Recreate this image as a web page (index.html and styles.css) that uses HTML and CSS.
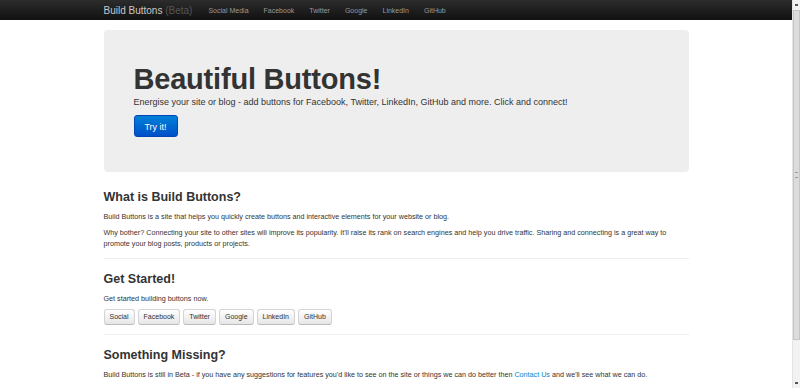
FILE: index.html
```html
<!DOCTYPE html>
<html lang="en">
<head>
    <meta charset="UTF-8">
    <title>Build Buttons</title>
    <link rel="stylesheet" href="styles.css">
</head>
<body>
    <div class="page">
        <div class="navbar">
            <div class="container nav-inner">
                <a class="brand" href="#">Build Buttons <span class="beta">(Beta)</span></a>
                <ul class="nav">
                    <li><a href="#">Social Media</a></li>
                    <li><a href="#">Facebook</a></li>
                    <li><a href="#">Twitter</a></li>
                    <li><a href="#">Google</a></li>
                    <li><a href="#">LinkedIn</a></li>
                    <li><a href="#">GitHub</a></li>
                </ul>
            </div>
        </div>

        <div class="container">
            <!-- Hero -->
            <div class="hero-unit">
                <h1>Beautiful Buttons!</h1>
                <p>Energise your site or blog - add buttons for Facebook, Twitter, LinkedIn, GitHub and more. Click and connect!</p>
                <a class="btn-primary" href="#">Try it!</a>
            </div>

            <div class="section">
                <h2>What is Build Buttons?</h2>
                <p>Build Buttons is a site that helps you quickly create buttons and interactive elements for your website or blog.</p>
                <p>Why bother? Connecting your site to other sites will improve its popularity. It'll raise its rank on search engines and help you drive traffic. Sharing and connecting is a great way to promote your blog posts, products or projects.</p>
            </div>
            <hr>

            <div class="section">
                <h2>Get Started!</h2>
                <p>Get started building buttons now.</p>
                <div class="btn-group">
                    <a class="btn" href="#">Social</a>
                    <a class="btn" href="#">Facebook</a>
                    <a class="btn" href="#">Twitter</a>
                    <a class="btn" href="#">Google</a>
                    <a class="btn" href="#">LinkedIn</a>
                    <a class="btn" href="#">GitHub</a>
                </div>
            </div>
            <hr>

            <div class="section">
                <h2>Something Missing?</h2>
                <p>Build Buttons is still in Beta - if you have any suggestions for features you'd like to see on the site or things we can do better then <a href="#">Contact Us</a> and we'll see what we can do.</p>
            </div>
        </div>
    </div>

    <!-- scrollbar of the window -->
    <div class="scrollbar">
        <div class="arrow up"></div>
        <div class="track">
            <div class="thumb"><span class="grip"></span></div>
        </div>
        <div class="arrow down"></div>
    </div>
</body>
</html>
```

FILE: styles.css
```css
html, body {
    height: 100%;
}
body {
    margin: 0;
    display: flex;
    overflow: hidden;
    font-family: 'Liberation Sans', Arial, sans-serif;
    font-size: 7.2px;
    line-height: 11px;
    color: #333;
    background-color: #fff;
}
a {
    color: #0088cc;
    text-decoration: none;
}
.page {
    flex: 1;
    overflow: hidden;
}
.container {
    width: 585px;
    margin: 0 auto;
}

/* navbar */
.navbar {
    height: 20px;
    background: linear-gradient(#2c2c2c, #111);
}
.nav-inner {
    display: flex;
    align-items: center;
    height: 20px;
}
.brand {
    color: #c8c8c8;
    font-size: 10px;
    margin-right: 16px;
}
.beta {
    color: #555;
}
.nav {
    display: flex;
    list-style: none;
    margin: 0;
    padding: 0;
}
.nav li a {
    color: #999;
    font-size: 7px;
    margin-right: 15px;
}

/* hero */
.hero-unit {
    margin-top: 10px;
    background-color: #eee;
    border-radius: 4px;
    padding: 35px 30px 35px;
}
.hero-unit h1 {
    margin: 0;
    font-size: 29px;
    line-height: 29px;
    font-weight: bold;
    letter-spacing: -0.2px;
    color: #333;
}
.hero-unit p {
    margin: 2px 0 7px;
    font-size: 9px;
    line-height: 12px;
}
.btn-primary {
    display: inline-block;
    width: 44px;
    height: 22px;
    line-height: 22px;
    text-align: center;
    color: #fff;
    font-size: 9px;
    border-radius: 3px;
    background: linear-gradient(#0080d8, #0050c8);
    border: 1px solid #0046b4;
    box-sizing: border-box;
}

/* sections */
.section {
    padding-top: 15px;
}
hr + .section {
    padding-top: 10px;
}
.section h2 {
    margin: 0;
    font-size: 12.5px;
    line-height: 20px;
    font-weight: bold;
    color: #333;
}
.section p {
    margin: 4px 0 5px;
}
hr {
    border: 0;
    border-top: 1px solid #eee;
    margin: 9px 0 0;
}

.btn-group {
    display: flex;
    gap: 3px;
    margin-top: 4px;
    margin-bottom: 9px;
}
.btn {
    display: inline-block;
    height: 16px;
    line-height: 14px;
    padding: 0 5px;
    box-sizing: border-box;
    font-size: 7px;
    color: #333;
    border: 1px solid #d4d4d4;
    border-bottom-color: #bbb;
    border-radius: 3px;
    background: linear-gradient(#fff, #e6e6e6);
}

/* window scrollbar */
.scrollbar {
    width: 8px;
    display: flex;
    flex-direction: column;
    background-color: #f2f2f2;
    border-left: 1px solid #e4e4e4;
    box-sizing: border-box;
}
.arrow {
    height: 10px;
    display: flex;
    align-items: center;
    justify-content: center;
}
.arrow::after {
    content: "";
    width: 3px;
    height: 2px;
    background-color: #555;
}
.track {
    flex: 1;
    padding-bottom: 38px;
}
.thumb {
    height: 330px;
    background-color: #dcdcdc;
    border: 1px solid #c6c6c6;
    box-sizing: border-box;
    display: flex;
    align-items: center;
    justify-content: center;
}
.grip {
    width: 3px;
    height: 4px;
    border-top: 1px solid #999;
    border-bottom: 1px solid #999;
}
```
